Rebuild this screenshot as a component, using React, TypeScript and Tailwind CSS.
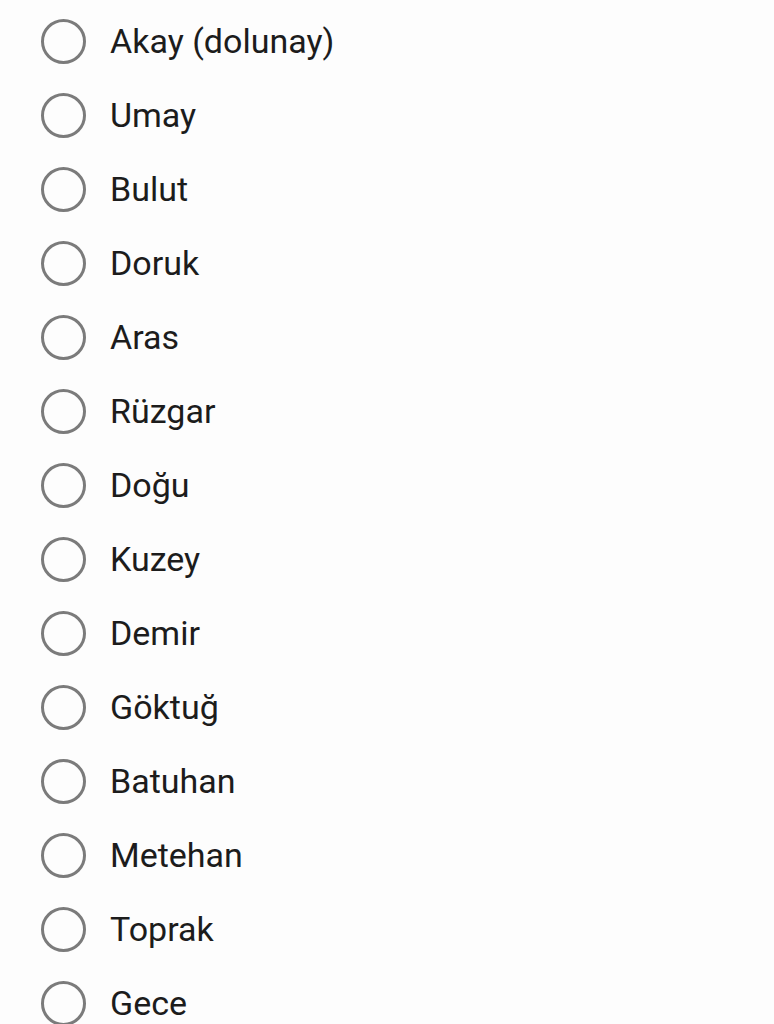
import React from "react";

const names = [
  "Akay (dolunay)",
  "Umay",
  "Bulut",
  "Doruk",
  "Aras",
  "Rüzgar",
  "Doğu",
  "Kuzey",
  "Demir",
  "Göktuğ",
  "Batuhan",
  "Metehan",
  "Toprak",
  "Gece",
];

export default function App() {
  return (
    <div
      className="w-[774px] h-[1024px] overflow-hidden bg-[#fdfdfd] pt-[4px]"
      style={{ fontFamily: "Roboto, 'Noto Sans', sans-serif" }}
    >
      {names.map((n) => (
        <div key={n} className="flex h-[74px] items-center pl-[41px]">
          <div className="h-[45px] w-[45px] shrink-0 rounded-full border-[3px] border-[#7b7b7b]" />
          <span className="ml-[24px] text-[34px] leading-none text-[#1c1c1c]">{n}</span>
        </div>
      ))}
    </div>
  );
}
